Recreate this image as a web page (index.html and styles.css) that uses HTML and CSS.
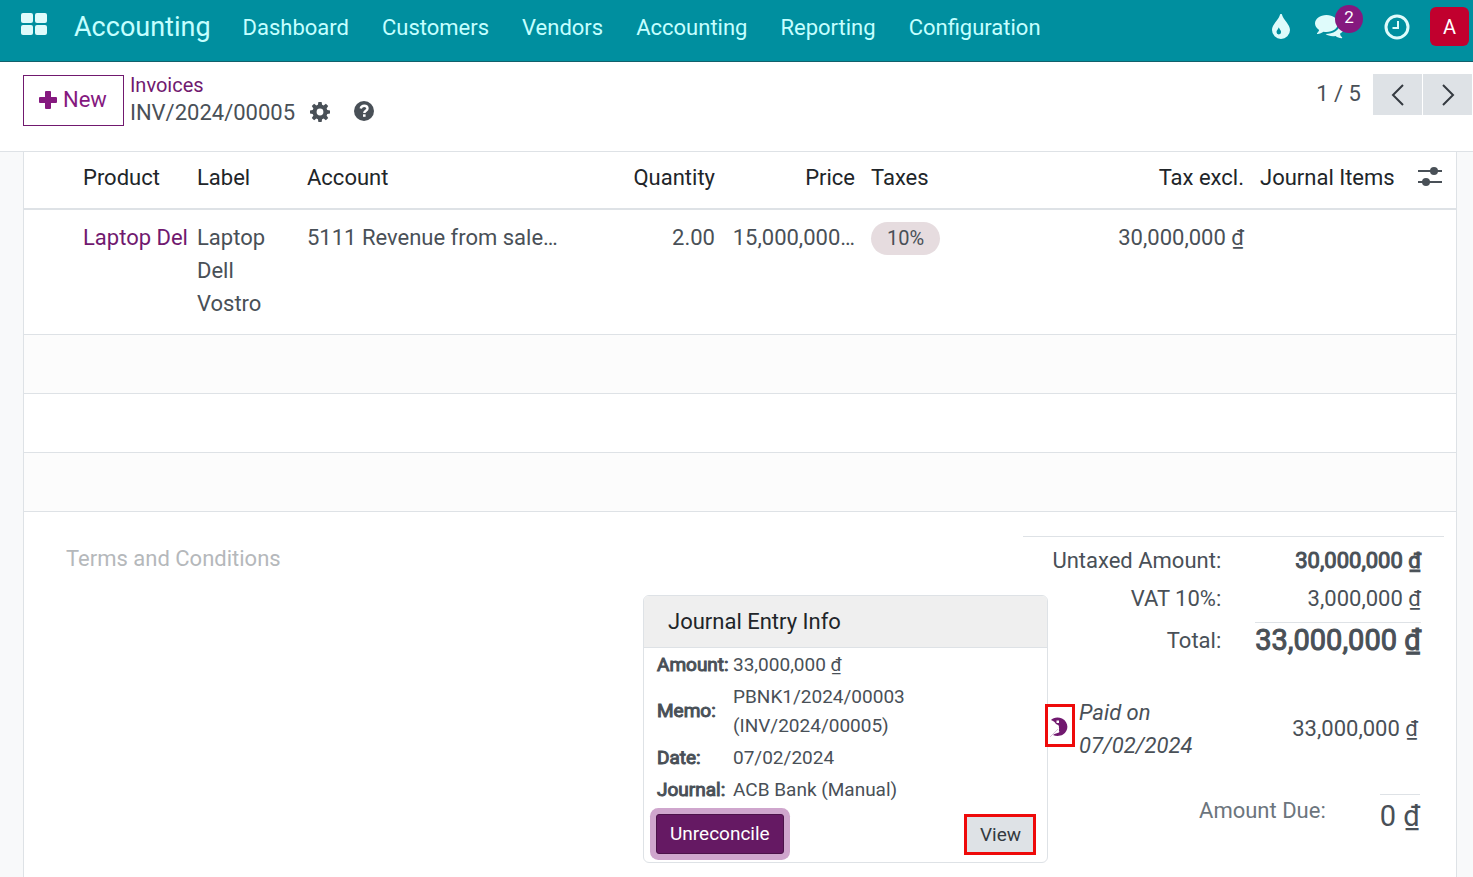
FILE: index.html
```html
<!DOCTYPE html>
<html lang="en">
<head>
    <meta charset="utf-8">
    <title>INV/2024/00005</title>
    <link rel="stylesheet" href="styles.css">
</head>
<body>
<header class="navbar">
    <button class="apps" aria-label="Home menu">
        <svg width="26" height="22" viewBox="0 0 26 22"><rect width="12" height="10" rx="2"/><rect x="14" width="12" height="10" rx="2"/><rect y="12" width="12" height="10" rx="2"/><rect x="14" y="12" width="12" height="10" rx="2"/></svg>
    </button>
    <a class="brand" href="#">Accounting</a>
    <nav class="menu">
        <a href="#">Dashboard</a>
        <a href="#">Customers</a>
        <a href="#">Vendors</a>
        <a href="#">Accounting</a>
        <a href="#">Reporting</a>
        <a href="#">Configuration</a>
    </nav>
    <div class="systray">
        <button aria-label="Theme">
            <svg width="18" height="25" viewBox="0 0 18 25"><path fill-rule="evenodd" d="M9 0c.8 0 1 .6 1.200 1.200C11.500 5.800 18 10.500 18 16a9 9 0 0 1-18 0C0 10.500 6.500 5.800 7.800 1.200 8 .6 8.200 0 9 0zM6.700 13.600c-.3 1.500-2.200 2.700-2.200 4.500a2.300 2.300 0 0 0 4.600 0c0-1.800-1.900-3-2.200-4.500z"/></svg>
        </button>
        <button class="chat" aria-label="Messages">
            <svg width="29" height="24" viewBox="0 0 29 24"><path d="M11.500 0C18 0 23 3.700 23 8.500S18 17 11.500 17c-1 0-2-.1-3-.3-1.700 1.300-3.700 2-6 2.300-.6 0-.8-.6-.3-1.100 1-1 1.600-1.700 1.900-3C1.600 13.300 0 11 0 8.500 0 3.700 5 0 11.500 0z"/><path d="M25 7.500c2.400 1.200 4 3.200 4 5.500 0 2.400-1.600 4.400-4 5.700.3 1.500.9 2.400 1.900 3.400.5.500.3 1.200-.3 1.100-2.300-.2-4.300-1-6-2.300-3.600.7-7.600 0-10-1.900C18 19 25 15 25 8.500z"/></svg>
            <span class="badge">2</span>
        </button>
        <button aria-label="Activities">
            <svg width="26" height="26" viewBox="0 0 26 26" class="line"><circle cx="13" cy="13" r="11"/><path d="M14 7v7H8.500" stroke-width="2"/></svg>
        </button>
        <button class="avatar">A</button>
    </div>
</header>

<div class="control-panel">
    <button class="btn-new">
        <svg width="18" height="18" viewBox="0 0 18 18"><path d="M7 0h4q1 0 1 1v5h5q1 0 1 1v4q0 1-1 1h-5v5q0 1-1 1H7q-1 0-1-1v-5H1q-1 0-1-1V7q0-1 1-1h5V1q0-1 1-1z"/></svg>
        New
    </button>
    <div class="breadcrumb">
        <a href="#">Invoices</a>
        <div class="current">
            <span>INV/2024/00005</span>
            <button aria-label="Actions">
                <svg width="20" height="20" viewBox="0 0 20 20"><path fill-rule="evenodd" d="M8.400 0h3.200l.5 2.700 1.500.7L15.900 1.800l2.300 2.300-1.600 2.300.7 1.500 2.700.5v3.200l-2.700.5-.7 1.500 1.600 2.300-2.300 2.300-2.300-1.600-1.500.7-.5 2.700H8.400l-.5-2.700-1.500-.7-2.300 1.600-2.300-2.300 1.600-2.300-.7-1.500L0 11.600V8.400l2.700-.5.7-1.500L1.800 4.100l2.300-2.300 2.300 1.600 1.500-.7zM10 6.600a3.400 3.400 0 1 0 0 6.800 3.400 3.400 0 0 0 0-6.800z"/></svg>
            </button>
            <button class="help" aria-label="Help">
                <svg width="20" height="20" viewBox="0 0 20 20"><circle cx="10" cy="10" r="10"/><path d="M6.700 7.500C7.200 5.600 8.500 4.700 10.200 4.700c1.900 0 3.300 1.100 3.300 2.700 0 2.300-3.200 2.300-3.200 4.600" fill="none" stroke="#fff" stroke-width="2.400"/><rect x="9" y="13.300" width="2.600" height="2.500" fill="#fff"/></svg>
            </button>
        </div>
    </div>
    <div class="pager">
        <span>1 / 5</span>
        <button aria-label="Previous"><svg width="14" height="22" viewBox="0 0 14 22" class="line"><path d="M12 1L2 11l10 10"/></svg></button>
        <button aria-label="Next"><svg width="14" height="22" viewBox="0 0 14 22" class="line"><path d="M2 1l10 10L2 21"/></svg></button>
    </div>
</div>

<main class="sheet">
    <table class="lines">
        <colgroup>
            <col class="c-handle"><col class="c-product"><col class="c-label"><col class="c-account"><col class="c-qty">
            <col class="c-price"><col><col class="c-total"><col class="c-items"><col class="c-opt">
        </colgroup>
        <thead>
        <tr>
            <th></th>
            <th>Product</th>
            <th>Label</th>
            <th>Account</th>
            <th class="num">Quantity</th>
            <th class="num">Price</th>
            <th>Taxes</th>
            <th class="num">Tax excl.</th>
            <th>Journal Items</th>
            <th>
                <button aria-label="Optional columns">
                    <svg width="24" height="20" viewBox="0 0 24 20"><path d="M0 4h24M0 15h24" stroke="#495057" stroke-width="2"/><circle cx="16" cy="4" r="4"/><circle cx="8" cy="15" r="4"/></svg>
                </button>
            </th>
        </tr>
        </thead>
        <tbody>
        <tr class="line-row">
            <td></td>
            <td class="product"><a href="#">Laptop Del</a></td>
            <td>Laptop Dell Vostro</td>
            <td class="nowrap">5111 Revenue from sale…</td>
            <td class="num">2.00</td>
            <td class="num nowrap">15,000,000…</td>
            <td><span class="tag">10%</span></td>
            <td class="num nowrap">30,000,000 ₫</td>
            <td></td>
            <td></td>
        </tr>
        <tr class="even"><td colspan="10"></td></tr>
        <tr><td colspan="10"></td></tr>
        <tr class="even"><td colspan="10"></td></tr>
        </tbody>
    </table>

    <div class="footer">
        <textarea class="terms" aria-label="Terms and Conditions" placeholder="Terms and Conditions"></textarea>

        <section class="totals">
            <dl class="subtotals">
                <dt>Untaxed Amount:</dt>
                <dd><b>30,000,000 ₫</b></dd>
                <dt>VAT 10%:</dt>
                <dd>3,000,000 ₫</dd>
                <dt class="total">Total:</dt>
                <dd class="total"><b>33,000,000 ₫</b></dd>
            </dl>
            <div class="payment">
                <button class="info marked" aria-label="Journal entry info">
                    <svg width="18" height="20" viewBox="0 0 18 20"><path fill-rule="evenodd" d="M1 3C3 .5 8-.6 12 1.500c7 3.500 7 12.500 1 16-3 1.800-7 1.800-10 .5 2-2 4-1.500 6-2.500 1-1-.5-1.500 0-3 .5-1-.5-2 0-3.500L8 8l-2-1L4.500 5 3 4zM6.500 3.500v2.500h2.500V3.500z"/><path d="M0 20l8-8" stroke="#d9c3dc" fill="none"/></svg>
                </button>
                <i>Paid on 07/02/2024</i>
                <span class="amount">33,000,000 ₫</span>

                <div class="popover">
                    <h3>Journal Entry Info</h3>
                    <table>
                        <tr><th>Amount:</th><td>33,000,000 ₫</td></tr>
                        <tr><th>Memo:</th><td>PBNK1/2024/00003<br>(INV/2024/00005)</td></tr>
                        <tr><th>Date:</th><td>07/02/2024</td></tr>
                        <tr><th>Journal:</th><td>ACB Bank (Manual)</td></tr>
                    </table>
                    <div class="actions">
                        <button class="unreconcile">Unreconcile</button>
                        <button class="view marked">View</button>
                    </div>
                </div>
            </div>
            <div class="due">
                <span>Amount Due:</span>
                <span class="due-amount">0 ₫</span>
            </div>
        </section>
    </div>
</main>
</body>
</html>
```

FILE: styles.css
```css
* {
    box-sizing: border-box;
}

body {
    margin: 0;
    min-height: 100vh;
    display: flex;
    flex-direction: column;
    background: #f8f9fa;
    color: #495057;
    font: 22px/33px Roboto, "Noto Sans", sans-serif;
}

a {
    color: #71196f;
    text-decoration: none;
}

button {
    border: 0;
    padding: 0;
    background: none;
    color: inherit;
    font: inherit;
}

svg {
    display: block;
    fill: currentColor;
}

svg.line {
    fill: none;
    stroke: currentColor;
    stroke-width: 3;
}

/* top bar */
.navbar {
    display: flex;
    align-items: center;
    height: 62px;
    padding: 0 4px 8px 21px;
    background: #008f9f;
    border-bottom: 1px solid #12606b;
    color: #dffbfb;
}

.navbar a {
    color: #c5ffff;
}

.apps {
    margin-right: 27px;
    padding-bottom: 5px;
}

.brand {
    padding-top: 1px;
    font-size: 27px;
    margin-right: 32px;
}

.menu {
    display: flex;
    gap: 33px;
    padding-top: 2px;
}

.systray {
    display: flex;
    align-items: center;
    margin-left: auto;
}

.chat {
    position: relative;
    margin: 0 40px 0 25px;
}

.badge {
    position: absolute;
    left: 20px;
    top: -10px;
    width: 28px;
    height: 28px;
    border-radius: 50%;
    background: #85197f;
    color: #fff;
    font-size: 17px;
    line-height: 24px;
}

.avatar {
    width: 39px;
    height: 39px;
    margin-left: 20px;
    padding-top: 2px;
    border-radius: 6px;
    background: #c1002e;
    color: #fff;
    font-size: 20px;
}

/* control panel */
.control-panel {
    display: flex;
    align-items: flex-start;
    height: 90px;
    padding: 12px 1px 0 23px;
    background: #fff;
    border-bottom: 1px solid #dee2e6;
}

.btn-new {
    display: flex;
    align-items: center;
    gap: 6px;
    height: 51px;
    margin: 1px 6px 0 0;
    padding: 0 16px 2px 15px;
    border: 1px solid #71196f;
    color: #85197f;
}

.breadcrumb > a {
    display: block;
    font-size: 20px;
    line-height: 23px;
}

.current {
    display: flex;
    align-items: center;
    line-height: 31px;
}

.current button {
    margin: 0 0 2px 15px;
}

.current .help {
    margin: 0 0 4px 24px;
}

.pager {
    display: flex;
    gap: 1px;
    margin-left: auto;
    line-height: 40px;
}

.pager span {
    margin-right: 11px;
}

.pager button {
    display: flex;
    align-items: center;
    justify-content: center;
    width: 49px;
    height: 41px;
    background: #dee2e6;
    color: #343a40;
}

.pager .line {
    stroke-width: 2;
}

/* invoice sheet */
.sheet {
    flex: 1;
    margin: 0 16px 0 23px;
    background: #fff;
    border: solid #dee2e6;
    border-width: 0 1px;
}

.lines {
    width: 100%;
    table-layout: fixed;
    border-collapse: collapse;
}

.c-handle { width: 51px; }
.c-product { width: 114px; }
.c-label { width: 110px; }
.c-account { width: 276px; }
.c-qty { width: 148px; }
.c-price { width: 140px; }
.c-total { width: 150px; }
.c-items { width: 158px; }
.c-opt { width: 46px; }

.lines th {
    height: 57px;
    padding: 0 8px 6px;
    border-bottom: 2px solid #dee2e6;
    color: #212529;
    font-weight: 400;
    text-align: left;
    white-space: nowrap;
}

.lines th button {
    display: block;
    color: #495057;
}

.lines td {
    height: 59px;
    padding: 11px 8px;
    border-bottom: 1px solid #dee2e6;
    vertical-align: top;
}

.lines .line-row td {
    height: 125px;
}

.lines .even {
    background: #fcfcfc;
}

.lines .num {
    text-align: right;
}

.nowrap,
.lines .product {
    white-space: nowrap;
}

.lines .product {
    padding-right: 0;
}

.tag {
    display: inline-block;
    padding: 0 16px;
    border-radius: 17px;
    background: #e6dcdf;
    font-size: 20px;
}

.footer {
    display: flex;
    align-items: flex-start;
    padding: 24px 12px 0 42px;
}

.terms {
    flex: 1;
    height: 200px;
    margin-top: 6px;
    padding: 0;
    border: 0;
    outline: 0;
    resize: none;
    background: none;
    font: inherit;
}

.terms::placeholder {
    color: #b5b8bb;
}

.totals {
    width: 421px;
    border-top: 1px solid #dee2e6;
}

/* bold drawn as a thickened regular face */
.totals b,
.popover th {
    font-weight: 400;
    -webkit-text-stroke: 1px currentColor;
}

.subtotals {
    display: grid;
    grid-template-columns: 1fr auto;
    justify-items: end;
    column-gap: 34px;
    margin: 0;
    padding: 5px 23px 0 0;
    line-height: 38px;
}

.subtotals dd {
    margin: 0;
}

.subtotals dt.total {
    padding-top: 4px;
}

.subtotals dd.total {
    margin-top: 4px;
    border-top: 1px solid #dee2e6;
    font-size: 29px;
    line-height: 34px;
}

.payment {
    position: relative;
    display: flex;
    align-items: center;
    margin-top: 36px;
    padding: 0 26px 0 23px;
}

.payment i {
    width: 130px;
    margin-left: 4px;
}

.amount {
    margin-left: auto;
}

.marked {
    border: 3px solid #ee0a0a;
}

.info {
    position: relative;
    z-index: 1;
    width: 30px;
    height: 43px;
    margin: 0 0 6px -1px;
    padding: 2px 0 0 2px;
    color: #71196f;
}

.popover {
    position: absolute;
    right: 396px;
    top: -101px;
    width: 405px;
    height: 268px;
    border: 1px solid #dee2e6;
    border-radius: 6px;
    background: #fff;
    font-size: 19px;
    line-height: 29px;
}

.popover h3 {
    margin: 0;
    padding: 0 24px;
    border-bottom: 1px solid #dee2e6;
    border-radius: 5px 5px 0 0;
    background: #efefef;
    color: #212529;
    font-size: 22px;
    font-weight: 400;
    line-height: 51px;
}

.popover table {
    margin-left: 12px;
    border-spacing: 0;
}

.popover th,
.popover td {
    padding: 2px 1px 1px;
    text-align: left;
}

.popover th {
    width: 76px;
}

.actions {
    display: flex;
    justify-content: space-between;
    padding: 9px 11px 0 12px;
}

.unreconcile {
    height: 40px;
    padding: 0 13px;
    border: 1px solid #4b1249;
    border-radius: 3px;
    background: #651963;
    box-shadow: 0 0 0 6px #cfa6cd;
    color: #fff;
}

.view {
    height: 41px;
    padding: 0 12px 0 13px;
    background: #dee2e6;
    color: #343a40;
}

.due {
    display: flex;
    justify-content: flex-end;
    gap: 54px;
    margin-top: 32px;
    padding-right: 24px;
    color: #6c757d;
}

.due-amount {
    border-top: 1px solid #dee2e6;
    color: #495057;
    font-size: 29px;
    line-height: 43px;
}
```
